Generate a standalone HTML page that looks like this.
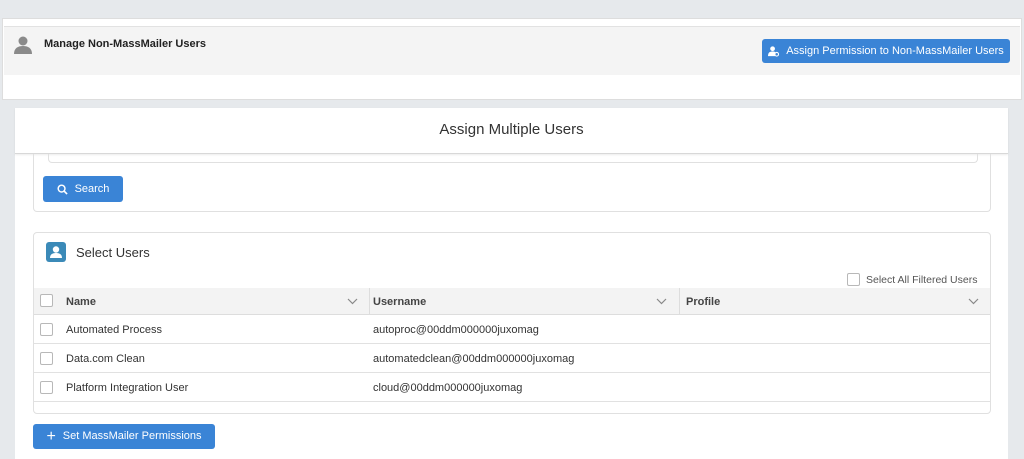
<!DOCTYPE html>
<html><head><style>
*{box-sizing:border-box;margin:0;padding:0}
body{width:1024px;height:459px;overflow:hidden;background:#e6e9ec;font-family:"Liberation Sans",sans-serif;position:relative;color:#181818}
.a{position:absolute}
.btn{position:absolute;background:#3a84d6;color:#fff;border-radius:3px;font-size:11px;line-height:13px;display:flex;align-items:center;justify-content:center;gap:7px}
.cb{position:absolute;width:13px;height:13px;border:1px solid #b8b8b8;border-radius:2px;background:#fff}
.row{position:absolute;left:34px;width:956px;height:29px;border-bottom:1px solid #e1e1e1;font-size:11px;color:#333}
.row span{position:absolute;top:9px}
.chev{position:absolute;top:10px}
</style></head><body>
<div class="a" style="left:2px;top:18px;width:1020px;height:82px;background:#fff;border:1px solid #ddd"></div>
<div class="a" style="left:4px;top:26px;width:1016px;height:49px;background:#f4f4f4;border-top:1px solid #e2e2e2"></div>
<svg class="a" style="left:13px;top:35px" width="20" height="20" viewBox="0 0 20 20"><circle cx="10" cy="6" r="4.5" fill="#8a8a8a"/><path d="M1 19c0-6 4-8 9-8s9 2 9 8z" fill="#8a8a8a"/></svg>
<div class="a" style="left:44px;top:38px;font-size:11px;font-weight:bold;color:#222">Manage Non-MassMailer Users</div>
<div class="btn" style="left:762px;top:39px;width:248px;height:24px"><svg width="11" height="11" viewBox="0 0 12 12"><circle cx="5" cy="3" r="2.6" fill="#fff"/><path d="M0 11c0-4 2-5 5-5s3 1 3 1v4z" fill="#fff"/><circle cx="9.5" cy="9" r="2" fill="none" stroke="#fff" stroke-width="1.2"/></svg>Assign Permission to Non-MassMailer Users</div>
<div class="a" style="left:15px;top:108px;width:993px;height:351px;background:#fff"></div>
<div class="a" style="left:15px;top:108px;width:993px;height:46px;border-bottom:1px solid #d8d8d8;box-shadow:0 1px 2px rgba(0,0,0,.08);text-align:center;font-size:15px;line-height:44px;color:#333">Assign Multiple Users</div>
<div class="a" style="left:33px;top:154px;width:958px;height:58px;border:1px solid #e0e0e0;border-top:none;border-radius:0 0 4px 4px"></div>
<div class="a" style="left:48px;top:154px;width:930px;height:9px;border:1px solid #e0e0e0;border-top:none;border-radius:0 0 4px 4px"></div>
<div class="btn" style="left:43px;top:176px;width:80px;height:26px"><svg width="11" height="11" viewBox="0 0 12 12"><circle cx="5" cy="5" r="3.7" fill="none" stroke="#fff" stroke-width="1.6"/><path d="M7.6 7.6L11 11" stroke="#fff" stroke-width="1.8"/></svg>Search</div>
<div class="a" style="left:33px;top:232px;width:958px;height:182px;border:1px solid #e0e0e0;border-radius:4px"></div>
<svg class="a" style="left:46px;top:242px" width="20" height="20" viewBox="0 0 20 20"><rect width="20" height="20" rx="3" fill="#3b8ab8"/><circle cx="10" cy="7.5" r="3.2" fill="#fff"/><path d="M4 16c0-4 3-5 6-5s6 1 6 5z" fill="#fff"/></svg>
<div class="a" style="left:76px;top:245px;font-size:13px;color:#333">Select Users</div>
<div class="cb" style="left:847px;top:273px"></div>
<div class="a" style="left:866px;top:274px;font-size:10.5px;color:#555">Select All Filtered Users</div>
<div class="a" style="left:34px;top:288px;width:956px;height:27px;background:#f3f3f3;border-bottom:1px solid #ddd;font-size:11px;font-weight:bold;color:#444">
<span class="a" style="left:32px;top:8px">Name</span><span class="a" style="left:339px;top:8px">Username</span><span class="a" style="left:652px;top:8px">Profile</span>
<span class="a" style="left:335px;top:0;width:1px;height:27px;background:#ddd"></span><span class="a" style="left:645px;top:0;width:1px;height:27px;background:#ddd"></span>
<svg class="chev" style="left:313px" width="11" height="7" viewBox="0 0 11 7"><path d="M1 1l4.5 4.5L10 1" fill="none" stroke="#888" stroke-width="1.2"/></svg>
<svg class="chev" style="left:622px" width="11" height="7" viewBox="0 0 11 7"><path d="M1 1l4.5 4.5L10 1" fill="none" stroke="#888" stroke-width="1.2"/></svg>
<svg class="chev" style="left:934px" width="11" height="7" viewBox="0 0 11 7"><path d="M1 1l4.5 4.5L10 1" fill="none" stroke="#888" stroke-width="1.2"/></svg></div>
<div class="cb" style="left:40px;top:294px"></div>
<div class="row" style="top:315px"><span style="left:32px">Automated Process</span><span style="left:339px">autoproc@00ddm000000juxomag</span></div>
<div class="cb" style="left:40px;top:323px"></div>
<div class="row" style="top:344px"><span style="left:32px">Data.com Clean</span><span style="left:339px">automatedclean@00ddm000000juxomag</span></div>
<div class="cb" style="left:40px;top:352px"></div>
<div class="row" style="top:373px"><span style="left:32px">Platform Integration User</span><span style="left:339px">cloud@00ddm000000juxomag</span></div>
<div class="cb" style="left:40px;top:381px"></div>
<div class="btn" style="left:33px;top:424px;width:182px;height:25px;font-size:11px"><span style="font-size:16px;line-height:11px">+</span>Set MassMailer Permissions</div>
</body></html>
